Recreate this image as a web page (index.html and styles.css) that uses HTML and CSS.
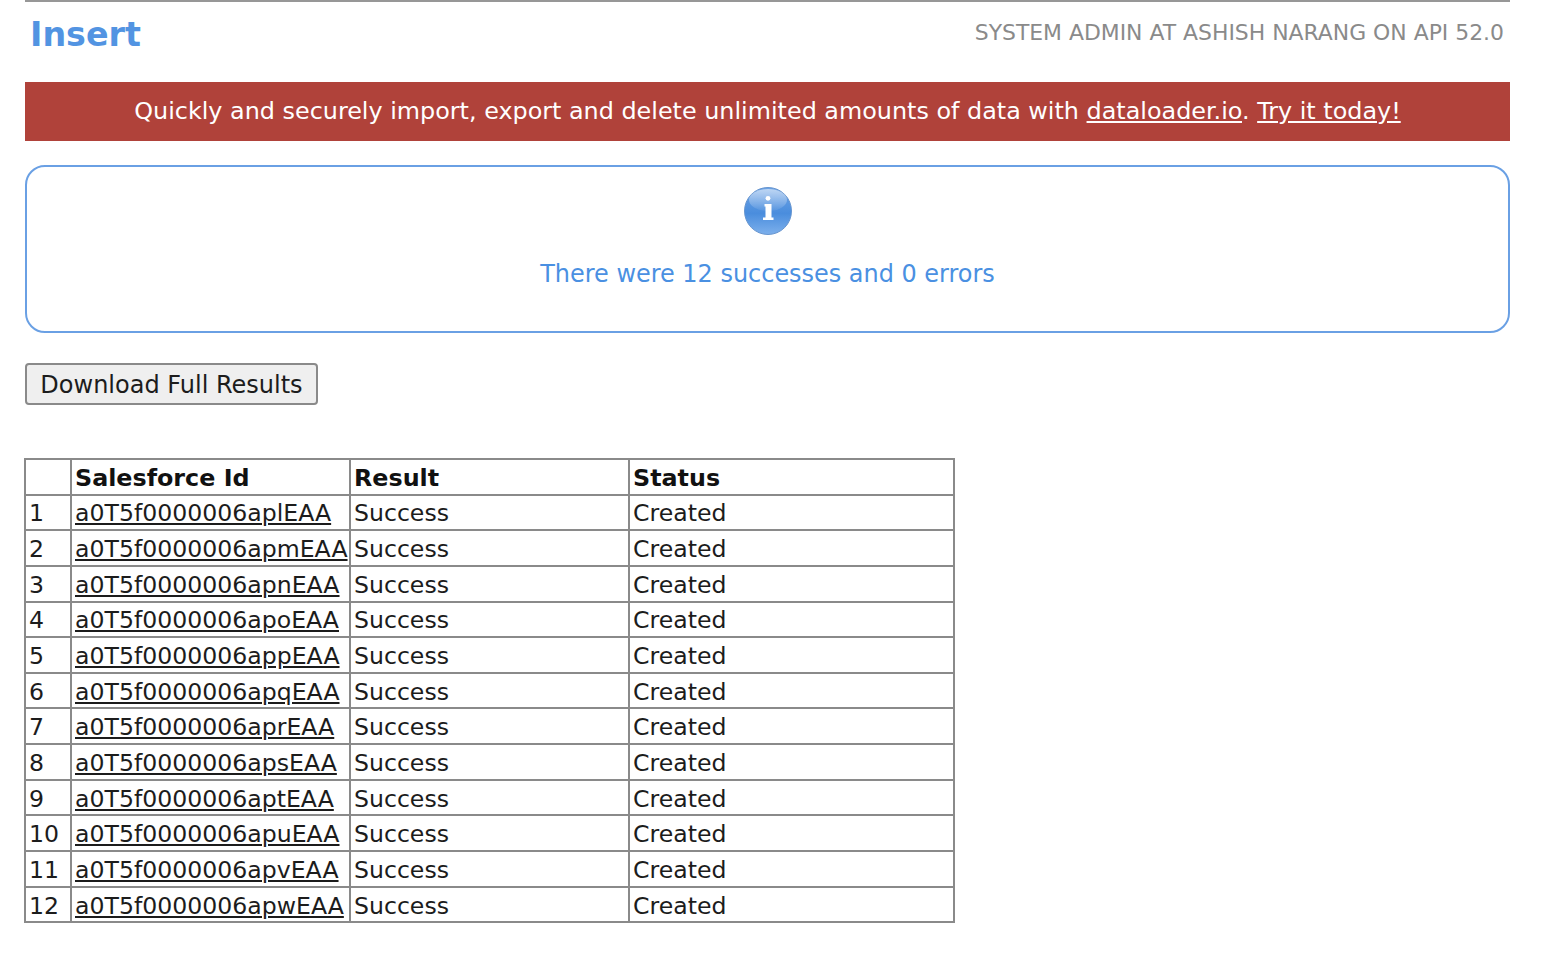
FILE: index.html
```html
<!DOCTYPE html>
<html lang="en">
<head>
<meta charset="utf-8">
<title>Insert</title>
<link rel="stylesheet" href="styles.css">
</head>
<body>
<div class="page">
  <header class="header">
    <h1 class="title">Insert</h1>
    <div class="user">SYSTEM ADMIN AT ASHISH NARANG ON API 52.0</div>
  </header>
  <div class="promo">Quickly and securely import, export and delete unlimited amounts of data with <a href="#">dataloader.io</a>. <a href="#">Try it today!</a></div>
  <section class="notice">
    <svg class="info-icon" viewBox="0 0 48 48" aria-hidden="true">
      <defs>
        <linearGradient id="orb" x1="0" y1="0" x2="0" y2="1">
          <stop offset="0" stop-color="#6ea4e6"/>
          <stop offset="0.55" stop-color="#4a8ddd"/>
          <stop offset="1" stop-color="#7db0ec"/>
        </linearGradient>
        <linearGradient id="shine" x1="0" y1="0" x2="0" y2="1">
          <stop offset="0" stop-color="#fff" stop-opacity="0.55"/>
          <stop offset="1" stop-color="#fff" stop-opacity="0.05"/>
        </linearGradient>
      </defs>
      <circle cx="24" cy="24" r="23.5" fill="url(#orb)" stroke="#6795cf" stroke-width="1"/>
      <ellipse cx="24" cy="13" rx="19" ry="11" fill="url(#shine)"/>
      <circle cx="24" cy="11.3" r="2.4" fill="#fff"/>
      <path d="M20.5 17h7v13.5h2V33H19v-2.500h2.500V19.500h-1z" fill="#fff"/>
    </svg>
    <p class="notice-text">There were 12 successes and 0 errors</p>
  </section>
  <button class="download" type="button">Download Full Results</button>
  <table class="results">
    <colgroup><col class="c-num"><col class="c-id"><col class="c-res"><col class="c-status"></colgroup>
    <thead><tr><th></th><th>Salesforce Id</th><th>Result</th><th>Status</th></tr></thead>
    <tbody>
      <tr><td>1</td><td><a href="#">a0T5f0000006aplEAA</a></td><td>Success</td><td>Created</td></tr>
      <tr><td>2</td><td><a href="#">a0T5f0000006apmEAA</a></td><td>Success</td><td>Created</td></tr>
      <tr><td>3</td><td><a href="#">a0T5f0000006apnEAA</a></td><td>Success</td><td>Created</td></tr>
      <tr><td>4</td><td><a href="#">a0T5f0000006apoEAA</a></td><td>Success</td><td>Created</td></tr>
      <tr><td>5</td><td><a href="#">a0T5f0000006appEAA</a></td><td>Success</td><td>Created</td></tr>
      <tr><td>6</td><td><a href="#">a0T5f0000006apqEAA</a></td><td>Success</td><td>Created</td></tr>
      <tr><td>7</td><td><a href="#">a0T5f0000006aprEAA</a></td><td>Success</td><td>Created</td></tr>
      <tr><td>8</td><td><a href="#">a0T5f0000006apsEAA</a></td><td>Success</td><td>Created</td></tr>
      <tr><td>9</td><td><a href="#">a0T5f0000006aptEAA</a></td><td>Success</td><td>Created</td></tr>
      <tr><td>10</td><td><a href="#">a0T5f0000006apuEAA</a></td><td>Success</td><td>Created</td></tr>
      <tr><td>11</td><td><a href="#">a0T5f0000006apvEAA</a></td><td>Success</td><td>Created</td></tr>
      <tr><td>12</td><td><a href="#">a0T5f0000006apwEAA</a></td><td>Success</td><td>Created</td></tr>
    </tbody>
  </table>
</div>
</body>
</html>
```
FILE: styles.css
```css
* { box-sizing: border-box; }
html, body { margin: 0; background: #fff; }
body { font-family: "DejaVu Sans", Verdana, sans-serif; color: #1c1c1c; font-size: 24px; }
.page { margin-left: 25px; width: 1485px; border-top: 2px solid #979797; padding-bottom: 39px; }
.header { display: flex; justify-content: space-between; align-items: flex-start; height: 80px; padding: 0 6px 0 5px; }
.title { margin: 14px 0 0; font-size: 33.3px; line-height: 38px; font-weight: 700; color: #5294e2; }
.user { margin-top: 18px; font-size: 21.9px; line-height: 25px; color: #8a8a8a; }
.promo { height: 59px; line-height: 58px; background: #b0423a; color: #fff; text-align: center; font-size: 23.87px; }
.promo a { color: #fff; }
.notice { display: flex; flex-direction: column; align-items: center; height: 168px; margin-top: 24px; border: 2px solid #6aa0e4; border-radius: 20px; padding-top: 20px; }
.info-icon { width: 48px; height: 48px; display: block; }
.notice-text { margin: 24px 0 0; font-size: 23.95px; line-height: 30px; color: #4a90e2; }
.download { display: block; margin-top: 30px; width: 293px; height: 42px; padding: 2px 0 0; background: #efefef; border: 2px solid #8a8a8a; border-radius: 4px; font: inherit; font-size: 24px; color: #1c1c1c; }
.results { margin: 53px 0 0 -1px; width: 931px; table-layout: fixed; border-collapse: collapse; font-size: 23.6px; }
.c-num { width: 46px; }
.c-id, .c-res { width: 279px; }
.results th, .results td { height: 35.65px; padding: 3px 3px 0; border: 2px solid #8a8a8a; text-align: left; white-space: nowrap; line-height: 29px; }
.results th { padding-top: 3px; font-size: 23.8px; color: #111; }
.results a { color: #1c1c1c; }
```
